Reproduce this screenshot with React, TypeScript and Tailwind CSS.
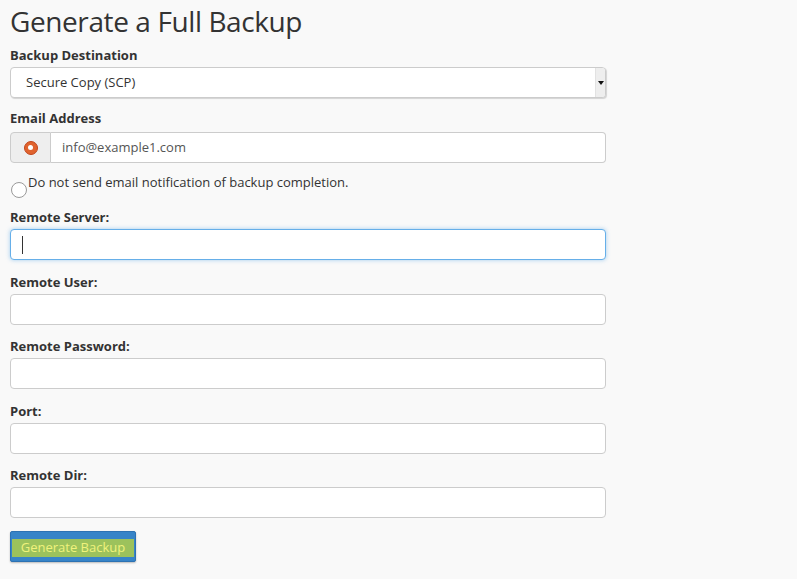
import React from "react";

const font = { fontFamily: '"Open Sans", "Noto Sans", sans-serif' };

function Field({ label, focused, mt }: { label: string; focused?: boolean; mt: string }) {
  return (
    <div className={"flex flex-col " + mt}>
      <div className="text-[13px] font-bold text-[#333] leading-[18px] h-[18px]">{label}</div>
      <div
        className={
          "mt-[3px] h-[31px] w-[596px] rounded-[4px] bg-white border flex items-center pl-[11px] " +
          (focused
            ? "border-[#66afe9] shadow-[0_0_4px_rgba(102,175,233,0.6)]"
            : "border-[#ccc]")
        }
      >
        {focused && <div className="w-px h-[18px] bg-[#333]" />}
      </div>
    </div>
  );
}

export default function App() {
  return (
    <div className="min-h-[579px] w-[797px] bg-[#f9f9f9] text-[#333] pl-[10px] pt-[1px]" style={font}>
      <h1 className="text-[28px] leading-[40px] tracking-[-0.4px] font-normal text-[#333]">Generate a Full Backup</h1>
      <div className="mt-[5px] text-[13px] font-bold leading-[18px] h-[18px]">Backup Destination</div>
      <div className="mt-[3px] h-[31px] w-[596px] rounded-[4px] bg-white border border-[#ccc] shadow-[1px_1px_1px_rgba(0,0,0,0.15)] flex items-center overflow-hidden">
        <div className="flex-1 pl-[15px] text-[13px] text-[#333]">Secure Copy (SCP)</div>
        <div className="w-[10px] h-full bg-[#eee] border-l border-[#e2e2e2] flex items-center justify-center">
          <svg width="6" height="4" viewBox="0 0 6 4"><path d="M0 0H6L3 4Z" fill="#111" /></svg>
        </div>
      </div>
      <div className="mt-[11px] text-[13px] font-bold leading-[18px] h-[18px]">Email Address</div>
      <div className="mt-[5px] h-[31px] w-[596px] flex">
        <div className="w-[41px] h-full bg-[#eee] border border-[#ccc] rounded-l-[4px] flex items-center justify-center">
          <div className="w-[14px] h-[14px] rounded-full bg-[#e0632e] border border-[#c2461c] flex items-center justify-center">
            <div className="w-[5px] h-[5px] rounded-full bg-white" />
          </div>
        </div>
        <div className="flex-1 h-full bg-white border border-l-0 border-[#ccc] rounded-r-[4px] flex items-center pl-[11px] text-[13px] text-[#555]">
          info@example1.com
        </div>
      </div>
      <div className="mt-[10px] flex items-start h-[25px]">
        <div className="mt-[9px] ml-[1px] w-[16px] h-[16px] rounded-full border border-[#9a9a9a] bg-white" />
        <div className="ml-[1px] text-[13px] leading-[18px] text-[#333]">Do not send email notification of backup completion.</div>
      </div>
      <Field label="Remote Server:" focused mt="mt-[10px]" />
      <Field label="Remote User:" mt="mt-[13px]" />
      <Field label="Remote Password:" mt="mt-[12px]" />
      <Field label="Port:" mt="mt-[13px]" />
      <Field label="Remote Dir:" mt="mt-[12px]" />
      <div className="mt-[13px] flex w-[126px] h-[31px] bg-[#3784c8] border border-[#2d72b3] rounded-[2px] pt-[7px] pb-[4px] px-[1px] shadow-[0_1px_2px_rgba(0,0,0,0.25)]">
        <div className="flex-1 bg-[#9cc25c] flex items-center justify-center text-[13px] text-[#f0f27c]">Generate Backup</div>
      </div>
    </div>
  );
}
